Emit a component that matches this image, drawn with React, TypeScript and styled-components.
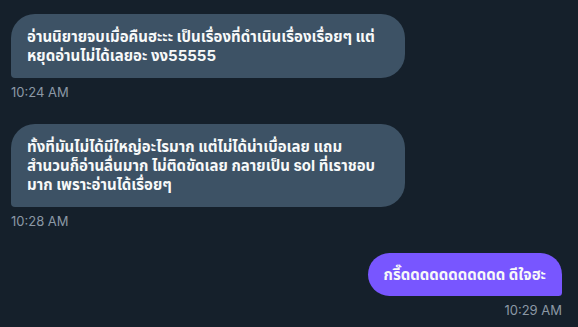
import React from "react";
import styled, { createGlobalStyle } from "styled-components";

const Global = createGlobalStyle`
  html, body { margin: 0; padding: 0; background: #15202b; }
  body { font-family: "Inter", "Noto Sans", "Noto Sans Thai", "Liberation Sans", sans-serif; }
`;

const Page = styled.div`
  width: 578px;
  height: 327px;
  box-sizing: border-box;
  padding: 14px 16px 0 11px;
  display: flex;
  flex-direction: column;
  background: #15202b;
  overflow: hidden;
`;

const Group = styled.div<{ $mine?: boolean }>`
  display: flex;
  flex-direction: column;
  align-items: ${(p) => (p.$mine ? "flex-end" : "flex-start")};
  margin-bottom: 24px;
`;

const Bubble = styled.div<{ $mine?: boolean }>`
  box-sizing: border-box;
  max-width: 394px;
  width: ${(p) => (p.$mine ? "auto" : "394px")};
  padding: ${(p) => (p.$mine ? "12px 16px" : "13px 16px")};
  border-radius: ${(p) => (p.$mine ? "24px 24px 4px 24px" : "24px 24px 24px 4px")};
  background: ${(p) => (p.$mine ? "#7856ff" : "#3d5265")};
  color: #f7f9f9;
  font-size: 15px;
  font-weight: 700;
  line-height: 19px;
`;

const Line = styled.span`
  display: block;
  white-space: nowrap;
`;

const Time = styled.div`
  margin-top: 6px;
  font-size: 13px;
  line-height: 16px;
  color: #8b98a5;
`;

const messages = [
  {
    mine: false,
    lines: [
      "อ่านนิยายจบเมื่อคืนฮะะะ เป็นเรื่องที่ดำเนินเรื่องเรื่อยๆ แต่",
      "หยุดอ่านไม่ได้เลยอะ งง55555",
    ],
    time: "10:24 AM",
  },
  {
    mine: false,
    lines: [
      "ทั้งที่มันไม่ได้มีใหญ่อะไรมาก แต่ไม่ได้น่าเบื่อเลย แถม",
      "สำนวนก็อ่านลื่นมาก ไม่ติดขัดเลย กลายเป็น sol ที่เราชอบ",
      "มาก เพราะอ่านได้เรื่อยๆ",
    ],
    time: "10:28 AM",
  },
  { mine: true, lines: ["กรี๊ดดดดดดดดดดด ดีใจฮะ"], time: "10:29 AM" },
];

export default function App() {
  return (
    <>
      <Global />
      <Page>
        {messages.map((m, i) => (
          <Group key={i} $mine={m.mine}>
            <Bubble $mine={m.mine}>
              {m.lines.map((l, j) => (
                <Line key={j}>{l}</Line>
              ))}
            </Bubble>
            <Time>{m.time}</Time>
          </Group>
        ))}
      </Page>
    </>
  );
}
